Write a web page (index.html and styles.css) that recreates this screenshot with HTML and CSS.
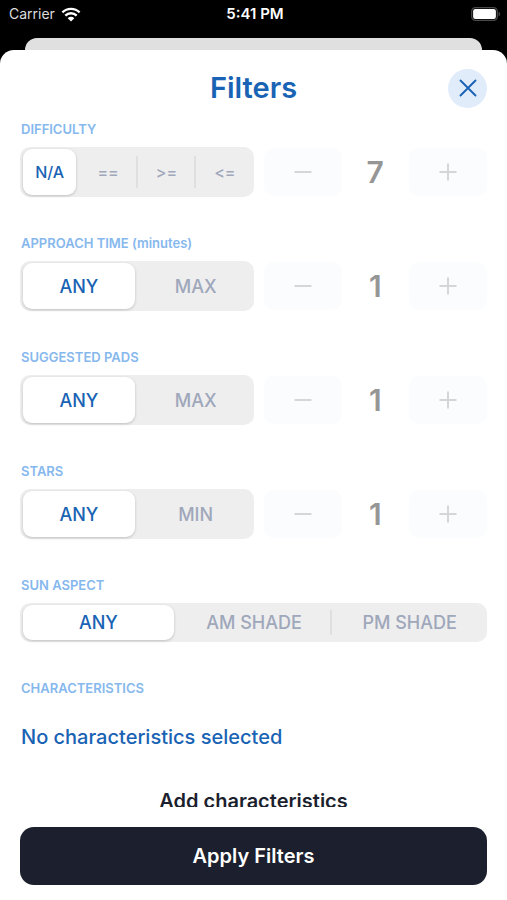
FILE: index.html
```html
<!DOCTYPE html>
<html lang="en">
<head>
<meta charset="utf-8">
<meta name="viewport" content="width=device-width, initial-scale=1">
<title>Filters</title>
<link rel="stylesheet" href="styles.css">
</head>
<body>
<div class="status">
  <div class="carrier">
    <span>Carrier</span>
    <svg width="20" height="15" viewBox="0 0 20 15" aria-hidden="true">
      <path d="M1.4 5.4a12.2 12.2 0 0 1 17.2 0M4.3 8.6a8.1 8.1 0 0 1 11.4 0" fill="none" stroke="#fff" stroke-width="2.3"/>
      <path d="M10 14.6 6.7 11.2a4.7 4.7 0 0 1 6.6 0z" fill="#fff"/>
    </svg>
  </div>
  <time class="time">5:41 PM</time>
  <svg class="battery" width="30" height="14" viewBox="0 0 30 14" aria-hidden="true">
    <rect x=".7" y=".7" width="25.6" height="12.6" rx="3.8" fill="none" stroke="#4a4a4a" stroke-width="1.3"/>
    <rect x="2.1" y="2.1" width="22.8" height="9.8" rx="2.2" fill="#fff"/>
    <path d="M27.6 4.7c2 .6 2 4 0 4.6z" fill="#4a4a4a"/>
  </svg>
</div>
<div class="behind"></div>
<main class="sheet">
  <header class="header">
    <h1 class="title">Filters</h1>
    <button class="close" type="button" aria-label="Close">
      <svg width="18" height="18" viewBox="0 0 18 18" aria-hidden="true"><path d="M1.5 1.5l15 15M16.5 1.5l-15 15" stroke="#1963b4" stroke-width="1.9" stroke-linecap="round"/></svg>
    </button>
  </header>
  <form class="filters">
    <fieldset class="section">
      <legend class="label">DIFFICULTY</legend>
      <div class="row">
        <div class="segments small">
          <label class="segment"><input type="radio" name="difficulty" checked><span>N/A</span></label>
          <label class="segment"><input type="radio" name="difficulty"><span>==</span></label>
          <label class="segment"><input type="radio" name="difficulty"><span>&gt;=</span></label>
          <label class="segment"><input type="radio" name="difficulty"><span>&lt;=</span></label>
        </div>
        <div class="stepper">
          <button class="step" type="button" disabled aria-label="Decrease"><svg width="18" height="18" viewBox="0 0 18 18"><path d="M.5 9h17"/></svg></button>
          <output class="value">7</output>
          <button class="step" type="button" disabled aria-label="Increase"><svg width="18" height="18" viewBox="0 0 18 18"><path d="M.5 9h17M9 .5v17"/></svg></button>
        </div>
      </div>
    </fieldset>
    <fieldset class="section">
      <legend class="label">APPROACH TIME (minutes)</legend>
      <div class="row">
        <div class="segments">
          <label class="segment"><input type="radio" name="approach" checked><span>ANY</span></label>
          <label class="segment"><input type="radio" name="approach"><span>MAX</span></label>
        </div>
        <div class="stepper">
          <button class="step" type="button" disabled aria-label="Decrease"><svg width="18" height="18" viewBox="0 0 18 18"><path d="M.5 9h17"/></svg></button>
          <output class="value">1</output>
          <button class="step" type="button" disabled aria-label="Increase"><svg width="18" height="18" viewBox="0 0 18 18"><path d="M.5 9h17M9 .5v17"/></svg></button>
        </div>
      </div>
    </fieldset>
    <fieldset class="section">
      <legend class="label">SUGGESTED PADS</legend>
      <div class="row">
        <div class="segments">
          <label class="segment"><input type="radio" name="pads" checked><span>ANY</span></label>
          <label class="segment"><input type="radio" name="pads"><span>MAX</span></label>
        </div>
        <div class="stepper">
          <button class="step" type="button" disabled aria-label="Decrease"><svg width="18" height="18" viewBox="0 0 18 18"><path d="M.5 9h17"/></svg></button>
          <output class="value">1</output>
          <button class="step" type="button" disabled aria-label="Increase"><svg width="18" height="18" viewBox="0 0 18 18"><path d="M.5 9h17M9 .5v17"/></svg></button>
        </div>
      </div>
    </fieldset>
    <fieldset class="section">
      <legend class="label">STARS</legend>
      <div class="row">
        <div class="segments">
          <label class="segment"><input type="radio" name="stars" checked><span>ANY</span></label>
          <label class="segment"><input type="radio" name="stars"><span>MIN</span></label>
        </div>
        <div class="stepper">
          <button class="step" type="button" disabled aria-label="Decrease"><svg width="18" height="18" viewBox="0 0 18 18"><path d="M.5 9h17"/></svg></button>
          <output class="value">1</output>
          <button class="step" type="button" disabled aria-label="Increase"><svg width="18" height="18" viewBox="0 0 18 18"><path d="M.5 9h17M9 .5v17"/></svg></button>
        </div>
      </div>
    </fieldset>
    <fieldset class="section">
      <legend class="label">SUN ASPECT</legend>
      <div class="segments short">
        <label class="segment"><input type="radio" name="sun" checked><span>ANY</span></label>
        <label class="segment"><input type="radio" name="sun"><span>AM SHADE</span></label>
        <label class="segment"><input type="radio" name="sun"><span>PM SHADE</span></label>
      </div>
    </fieldset>
    <section class="characteristics">
      <h2 class="label">CHARACTERISTICS</h2>
      <p class="empty">No characteristics selected</p>
      <button class="add" type="button">Add characteristics</button>
    </section>
  </form>
  <footer class="footer">
    <button class="apply" type="button">Apply Filters</button>
  </footer>
</main>
</body>
</html>
```

FILE: styles.css
```css
* {
  box-sizing: border-box;
}

body {
  margin: 0;
  height: 100vh;
  display: flex;
  flex-direction: column;
  background: #000;
  color: #1963b4;
  font-family: Inter, "Liberation Sans", sans-serif;
  overflow: hidden;
}

button {
  font-family: inherit;
  border: 0;
  padding: 0;
}

svg {
  display: block;
}

.status {
  display: grid;
  grid-template-columns: 1fr auto 1fr;
  align-items: center;
  flex: none;
  height: 38px;
  padding: 0 6px 10px 9px;
  color: #fff;
  font-size: 14px;
  line-height: 20px;
}

.carrier {
  display: flex;
  align-items: center;
  gap: 6px;
  color: #ddd;
}

.time {
  font-size: 15px;
  font-weight: 600;
}

.battery {
  justify-self: end;
}

.behind {
  flex: none;
  height: 12px;
  margin: 0 25px;
  background: #e0e0e0;
  border-radius: 12px 12px 0 0;
}

.sheet {
  flex: 1;
  min-height: 0;
  display: flex;
  flex-direction: column;
  background: #fff;
  border-radius: 14px 14px 0 0;
}

.header {
  display: grid;
  grid-template-columns: 1fr auto 1fr;
  align-items: center;
  flex: none;
  height: 70px;
  padding: 6px 20px 0;
}

.title {
  grid-column: 2;
  margin: 0;
  font-size: 29px;
  font-weight: 600;
  line-height: 36px;
}

.close {
  justify-self: end;
  display: grid;
  place-items: center;
  width: 39px;
  height: 39px;
  border-radius: 50%;
  background: #e1ecfb;
}

.filters {
  flex: 1;
  min-height: 0;
  display: flex;
  flex-direction: column;
  gap: 37px;
  padding: 0 20px;
  overflow: hidden;
}

.section {
  flex: none;
  min-width: 0;
  margin: 0;
  padding: 0;
  border: 0;
}

.label {
  margin: 0 0 10px;
  padding: 1px 1px 0;
  color: #86b8ee;
  font-size: 13px;
  font-weight: 600;
  line-height: 16px;
  letter-spacing: 0;
}

.row {
  display: grid;
  grid-template-columns: 1fr 1fr;
}

.segments {
  display: flex;
  height: 50px;
  background: #eee;
  border-radius: 10px;
}

.segments.short {
  height: 39px;
}

.segment {
  position: relative;
  flex: 1 1 0;
  display: flex;
  padding: 2px 2px 2px 3px;
  color: #9fa7bb;
  font-size: 18px;
  font-weight: 500;
}

.small .segment {
  font-size: 16px;
}

.segment input {
  position: absolute;
  opacity: 0;
}

.segment span {
  flex: 1;
  display: grid;
  place-items: center;
  border-radius: 9px;
  font-feature-settings: "calt" 0;
}

.segment input:checked + span {
  background: #fff;
  color: #1963b4;
  box-shadow: 0 1px 3px rgba(0, 0, 0, 0.2);
}

.segment:nth-child(n + 3)::before {
  content: "";
  position: absolute;
  left: -1px;
  top: 18%;
  bottom: 18%;
  width: 2px;
  background: #dfdfe0;
}

.stepper {
  display: grid;
  grid-template-columns: 7fr 6fr 7fr;
  align-items: center;
  padding-left: 10px;
}

.step {
  display: grid;
  place-items: center;
  height: 48px;
  border-radius: 10px;
  background: #fafcfd;
}

.step path {
  fill: none;
  stroke: #d6d6d6;
  stroke-width: 2;
}

.value {
  text-align: center;
  color: #969696;
  font-size: 30px;
  font-weight: 600;
  line-height: 36px;
}

.characteristics {
  flex: none;
  display: flex;
  flex-direction: column;
}

.empty {
  margin: 19px 0 0;
  padding: 0 1px;
  font-size: 20px;
  font-weight: 500;
  line-height: 24px;
}

.add {
  margin-top: 40px;
  background: none;
  color: #1c1f2d;
  font-size: 20px;
  font-weight: 600;
  line-height: 24px;
}

.footer {
  flex: none;
  padding: 20px 20px 15px;
}

.apply {
  width: 100%;
  height: 58px;
  border-radius: 14px;
  background: #1c1f2d;
  color: #fff;
  font-size: 20px;
  font-weight: 600;
}
```
